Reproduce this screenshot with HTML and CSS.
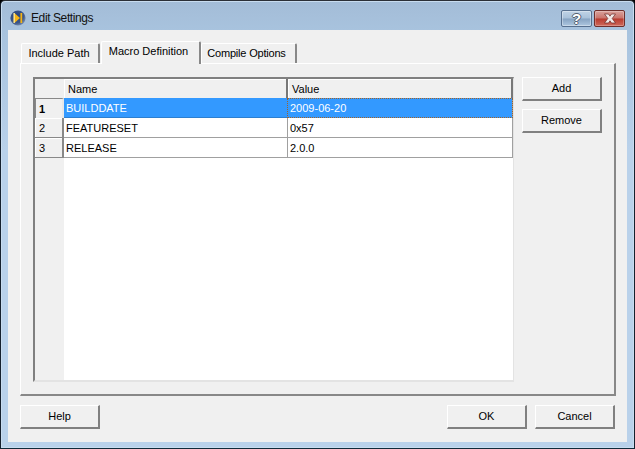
FILE: index.html
```html
<!DOCTYPE html>
<html lang="en">
<head>
<meta charset="utf-8">
<title>Edit Settings</title>
<link rel="stylesheet" href="styles.css">
</head>
<body>
<div class="window">
  <div class="titlebar">
    <svg class="app-icon" width="16" height="16" viewBox="0 0 16 16">
      <defs>
        <radialGradient id="orb" cx="0.4" cy="0.38" r="0.7">
          <stop offset="0" stop-color="#22407f"/>
          <stop offset="0.65" stop-color="#3c5688"/>
          <stop offset="1" stop-color="#8c9fb8"/>
        </radialGradient>
      </defs>
      <circle cx="8" cy="8" r="7.6" fill="url(#orb)"/>
      <rect x="3.4" y="3" width="1.6" height="10" fill="#f7e08a"/>
      <path d="M5 3.6 L10 8 L5 12.4 Z" fill="#f5b414"/>
      <rect x="10.4" y="3" width="1.8" height="10" fill="#f5b414"/>
    </svg>
    <span class="title">Edit Settings</span>
    <div class="caption-buttons">
      <div class="cap cap-help">?</div>
      <div class="cap cap-close">
        <svg width="18" height="11" viewBox="0 0 18 11"><path d="M3.5 1 H7.5 L9 3.2 L10.5 1 H14.5 L11.2 5.5 L14.5 10 H10.5 L9 7.8 L7.5 10 H3.5 L6.8 5.5 Z" fill="#f1e9e8" stroke="#6b2a25" stroke-width=".7"/></svg>
      </div>
    </div>
  </div>
  <div class="client">
    <div class="tabs">
      <div class="tab">Include Path</div>
      <div class="tab tab-active">Macro Definition</div>
      <div class="tab">Compile Options</div>
    </div>
    <div class="pane">
      <div class="grid">
        <div class="row row-head">
          <div class="rowhead corner"></div>
          <div class="cell cell-name head">Name</div>
          <div class="cell cell-value head">Value</div>
        </div>
        <div class="row row-selected">
          <div class="rowhead rowhead-current">1</div>
          <div class="cell cell-name">BUILDDATE</div>
          <div class="cell cell-value cell-focus">2009-06-20</div>
        </div>
        <div class="row">
          <div class="rowhead">2</div>
          <div class="cell cell-name">FEATURESET</div>
          <div class="cell cell-value">0x57</div>
        </div>
        <div class="row">
          <div class="rowhead">3</div>
          <div class="cell cell-name">RELEASE</div>
          <div class="cell cell-value">2.0.0</div>
        </div>
        <div class="grid-rest"><div class="rest-head"></div><div class="rest-body"></div></div>
      </div>
      <div class="side-buttons">
        <div class="btn">Add</div>
        <div class="btn">Remove</div>
      </div>
    </div>
    <div class="footer">
      <div class="btn">Help</div>
      <div class="footer-right">
        <div class="btn">OK</div>
        <div class="btn">Cancel</div>
      </div>
    </div>
  </div>
</div>
</body>
</html>
```
FILE: styles.css
```css
* { box-sizing: border-box; }
html, body { margin: 0; padding: 0; width: 635px; height: 449px; background: #000; overflow: hidden; }
body { font-family: "Liberation Sans", Arial, sans-serif; font-size: 11px; color: #000; }
.window {
  width: 635px; height: 449px; display: flex; flex-direction: column;
  background: linear-gradient(180deg, #a3bcd7 0, #a8c3de 30px, #b9d1ea 150px, #b9d1ea 100%);
  border: 1px solid #15202e; border-top-color: #2b2f36;
  border-bottom-color: #0f2a3a; border-radius: 5px 5px 0 0;
  box-shadow: inset 0 0 0 1px #c8dcef;
}
.titlebar {
  height: 28px; flex: none; display: flex; align-items: center;
  padding: 0 8px 0 8px;
  margin: 1px 1px 0;
}
.app-icon { flex: none; margin-top: 3px; }
.title { margin-left: 5px; font-size: 12px; letter-spacing: -0.4px; color: #111; margin-top: 3px; }
.caption-buttons { margin-left: auto; display: flex; gap: 2px; margin-top: 5px; }
.cap { height: 17px; border-radius: 2px; display: flex; align-items: center; justify-content: center; }
.cap-help {
  width: 31px; border: 1px solid #57708f; color: #fff; font-weight: bold; font-size: 15px;
  background: linear-gradient(180deg, #c0d3e6 0, #a9c1da 48%, #86a3c2 52%, #aec7e0 100%);
  box-shadow: inset 0 0 0 1px rgba(255,255,255,.35);
  text-shadow: 1px 0 0 #55606e, -1px 0 0 #55606e, 0 1px 0 #55606e, 0 -1px 0 #55606e;
}
.cap-close {
  width: 31px; border: 1px solid #6e2f2c;
  background: linear-gradient(180deg, #d9a29c 0, #c9736b 48%, #b83a2e 52%, #cf6a5c 100%);
  box-shadow: inset 0 0 0 1px rgba(255,255,255,.25);
}
.client {
  flex: 1; margin: 0 7px 6px 7px; background: #f0f0f0;
  padding: 11px 11px 11px 12px; display: flex; flex-direction: column;
}
.tabs { display: flex; height: 22px; align-items: flex-start; padding-left: 1px; position: relative; z-index: 1; flex: none; }
.tab {
  height: 20px; margin-top: 2px; width: 79px; margin-right: 1px; background: #f0f0f0;
  border: 1px solid #fff; border-right: 2px solid #888; border-bottom: 0;
  border-radius: 2px 2px 0 0; display: flex; align-items: center; justify-content: center;
  padding: 0 2px 2px 0;
}
.tab-active { height: 23px; margin-top: 0; width: 100px; margin-right: 0; padding: 0 4px 4px 0; }
.tab:last-child { width: 96px; letter-spacing: -0.2px; padding-right: 4px; }
.pane {
  height: 333px; flex: none; display: flex; gap: 8px; align-items: flex-start;
  padding: 13px 12px 0 12px;
  border: 1px solid; border-width: 1px 2px 2px 1px; border-color: #fff #888 #888 #fff;
}
.grid {
  width: 481px; height: 305px; flex: none; display: flex; flex-direction: column;
  border: 1px solid; border-width: 2px 1px 2px 2px; border-color: #808080 #e3e3e3 #e3e3e3 #808080;
}
.row { display: flex; height: 20px; flex: none; }
.rowhead {
  width: 29px; flex: none; padding: 0 0 0 4px; display: flex; align-items: center;
  background: #f0f0f0; border-right: 2px solid #888; border-bottom: 1px solid #888;
  box-shadow: inset 1px 1px 0 #fff;
}
.corner { border: 0; box-shadow: none; }
.rowhead-current {
  font-weight: bold; border-top: 1px solid #888; border-left: 1px solid #888;
  border-right: 2px solid #e8e8e8; border-bottom: 0; padding-left: 3px;
  box-shadow: none;
}
.cell { display: flex; align-items: center; background: #fff; border-bottom: 1px solid #a0a0a0; padding-left: 2px; white-space: nowrap; }
.cell-name { width: 224px; flex: none; border-right: 1px solid #a0a0a0; }
.cell-value { flex: 1; padding-left: 2px; border-right: 1px solid #a0a0a0; }
.head { background: #f0f0f0; padding-left: 4px; border-bottom: 0; border-right: 2px solid #777; box-shadow: inset 1px 1px 0 #fff; }
.cell-value.head { padding-left: 4px; border-right: 2px solid #777; }
.row-head { height: 19px; }
.row-selected .cell { background: #3399ff; color: #fff; border-bottom: 1px solid #2d7fd0; }
.row-selected .cell-name { width: 223px; border-right: 0; }
.cell-focus { outline: 1px dotted #a0622a; outline-offset: -1px; border-bottom: 0 !important; padding-left: 3px !important; }
.grid-rest { flex: 1; display: flex; }
.rest-head { width: 29px; background: #f0f0f0; flex: none; }
.rest-body { flex: 1; background: #fff; }
.side-buttons { display: flex; flex-direction: column; gap: 8px; flex: none; }
.btn {
  width: 80px; height: 24px; display: flex; align-items: center; justify-content: center;
  background: #f0f0f0; border: 1px solid; border-width: 1px 2px 2px 1px;
  border-color: #fff #808080 #808080 #fff; padding-bottom: 1px;
}
.footer { display: flex; justify-content: space-between; margin-top: 9px; margin-right: 1px; flex: none; }
.footer-right { display: flex; gap: 8px; }
```
